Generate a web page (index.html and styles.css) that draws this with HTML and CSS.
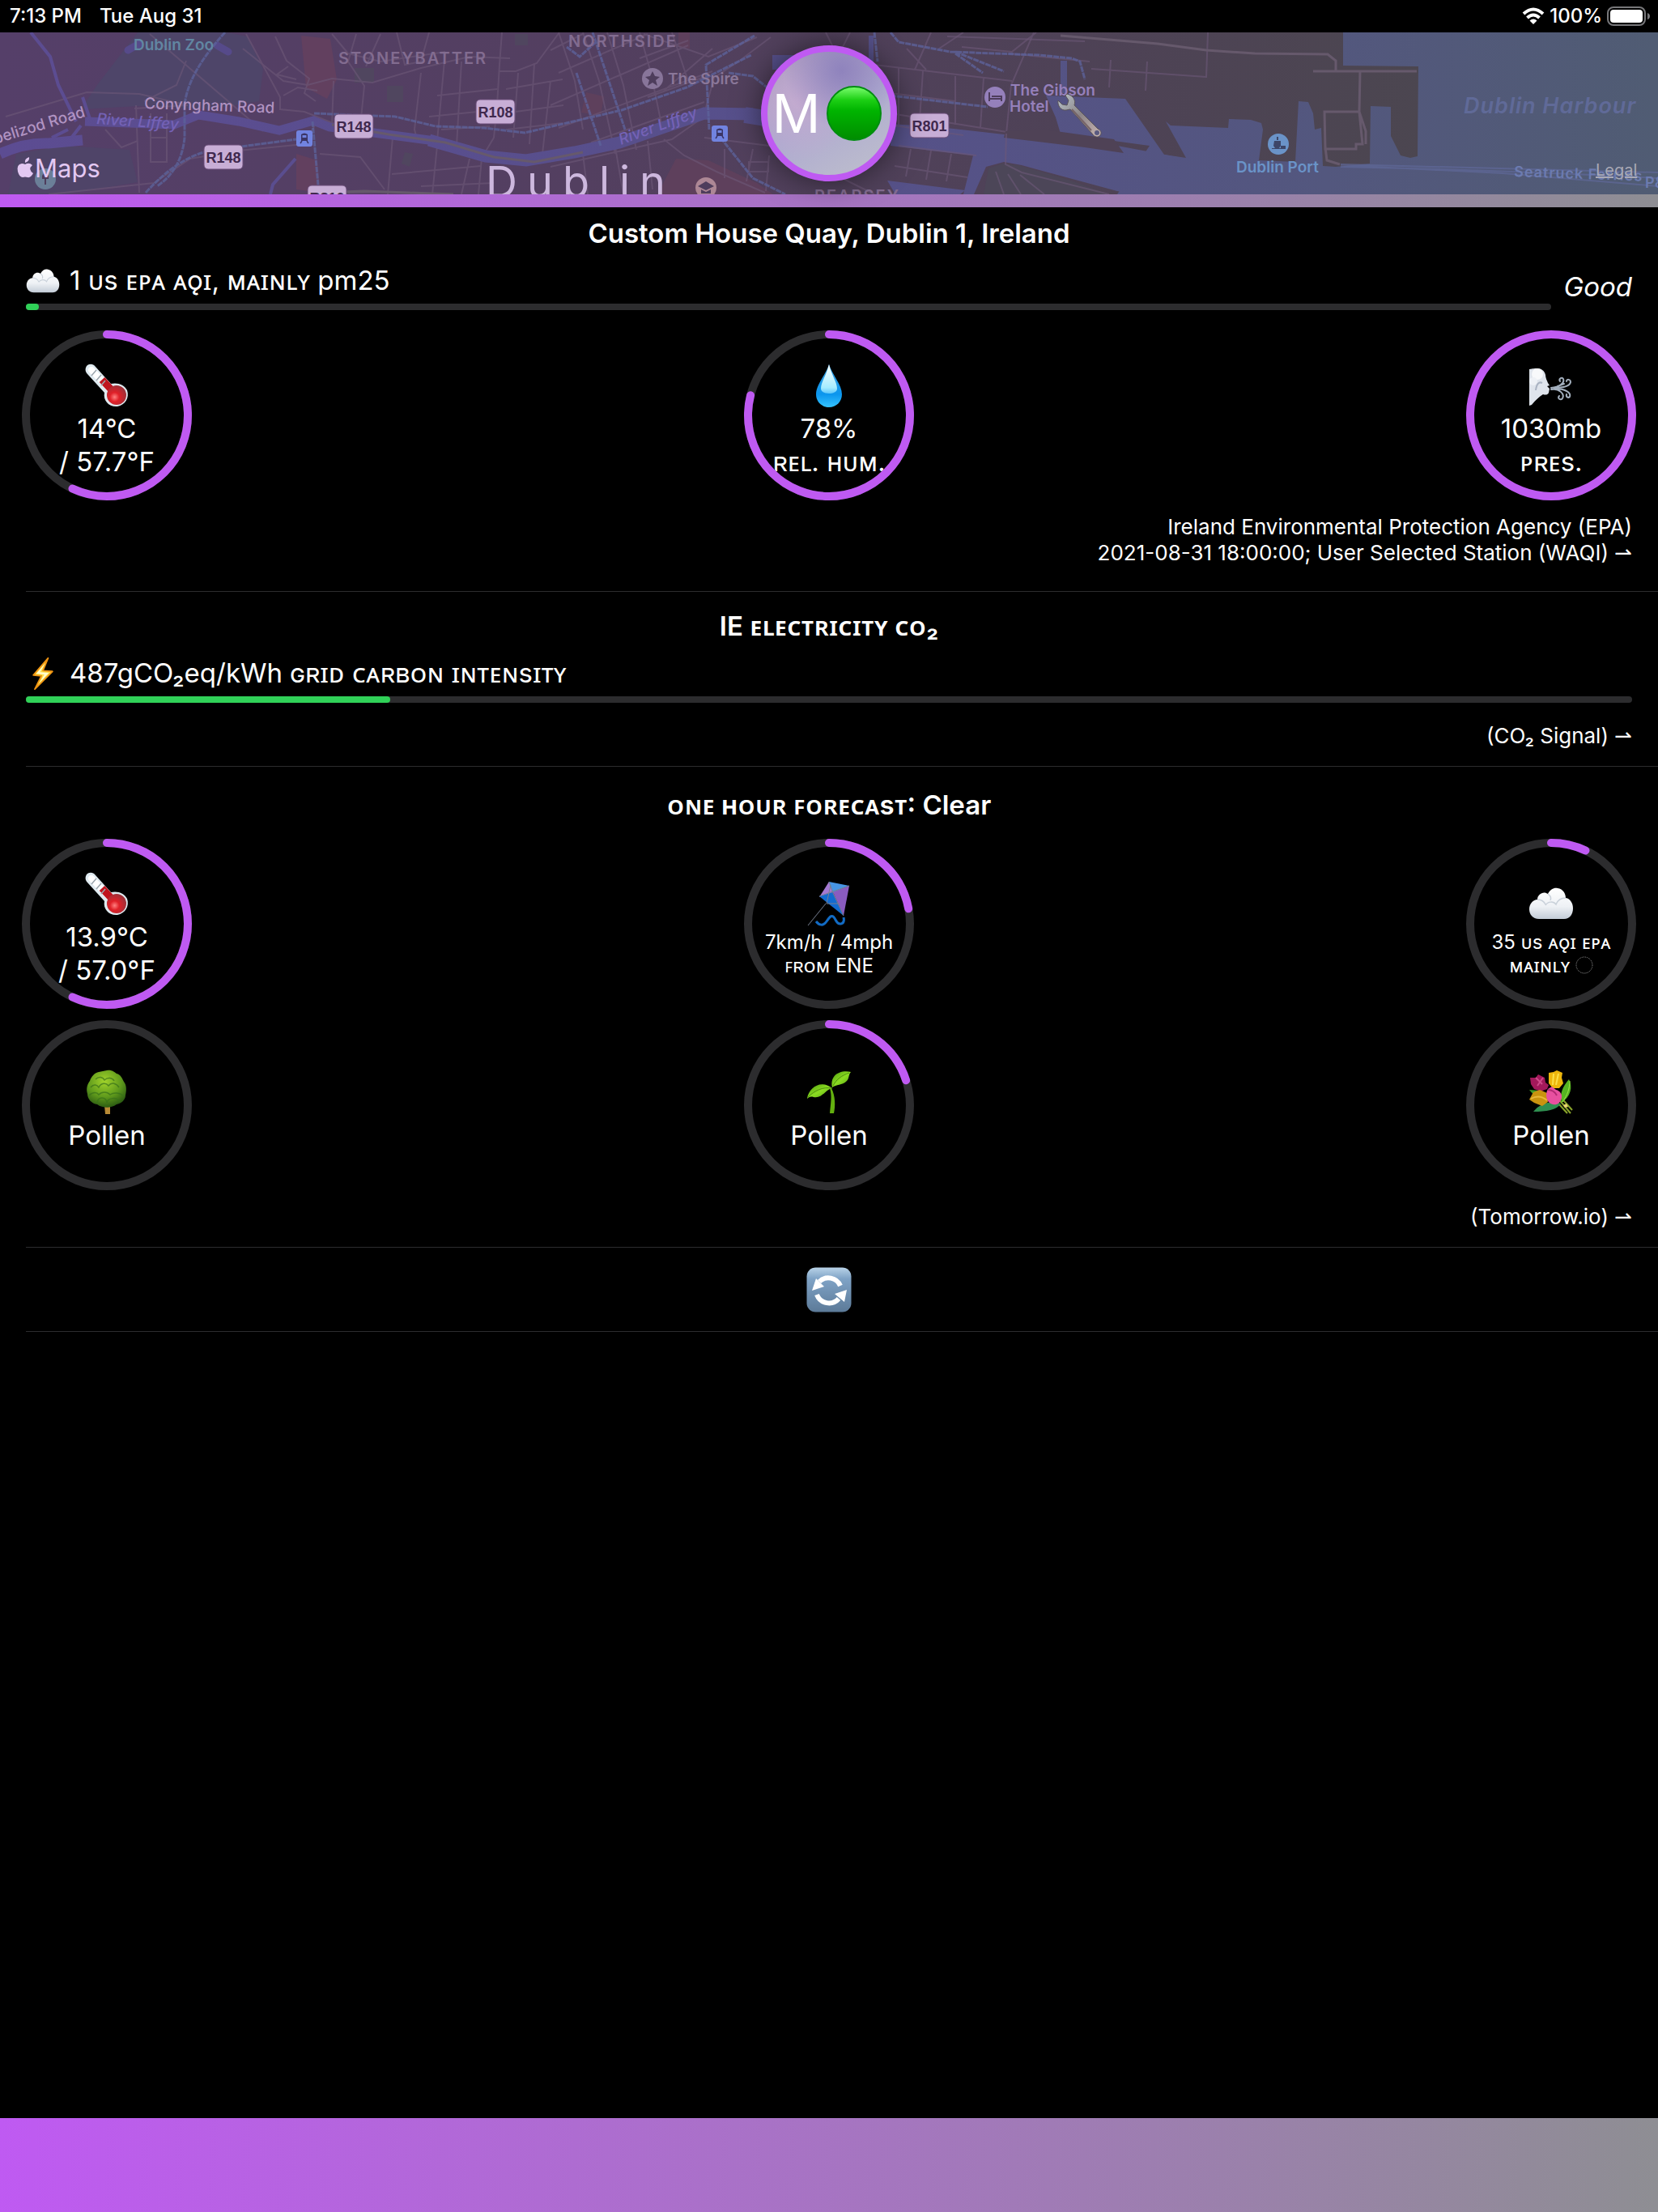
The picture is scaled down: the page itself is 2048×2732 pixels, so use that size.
FILE: index.html
```html
<!DOCTYPE html>
<html lang="en">
<head>
<meta charset="utf-8">
<meta name="viewport" content="width=device-width, initial-scale=1">
<title>Air and energy</title>
<link rel="stylesheet" href="styles.css">
</head>
<body>
<svg class="defs" aria-hidden="true">
  <defs>
    <linearGradient id="cloudFill" x1="0" y1="0" x2="0" y2="1"><stop offset="0" stop-color="#fff"/><stop offset=".6" stop-color="#eef1f5"/><stop offset="1" stop-color="#c3ccd7"/></linearGradient>
    <radialGradient id="bulb" cx=".4" cy=".6" r=".6"><stop offset="0" stop-color="#ff8080"/><stop offset=".4" stop-color="#e02028"/><stop offset="1" stop-color="#a03038"/></radialGradient>
    <linearGradient id="drop" x1="0" y1="0" x2="0" y2="1"><stop offset="0" stop-color="#3aa0e0"/><stop offset=".7" stop-color="#0b96ee"/><stop offset="1" stop-color="#35c4ff"/></linearGradient>
    <linearGradient id="dropShine" x1="0" y1="0" x2="0" y2="1"><stop offset="0" stop-color="#fff"/><stop offset=".8" stop-color="#a5ecff"/><stop offset="1" stop-color="#5cc6fb"/></linearGradient>
    <radialGradient id="leafage" cx=".45" cy=".3" r=".7"><stop offset="0" stop-color="#a2d42b"/><stop offset=".6" stop-color="#5f9a1c"/><stop offset="1" stop-color="#2c5c12"/></radialGradient>
    <linearGradient id="leaf" x1="0" y1="0" x2="1" y2="1"><stop offset="0" stop-color="#4d9a0c"/><stop offset=".5" stop-color="#8bdc22"/><stop offset="1" stop-color="#4d9a0c"/></linearGradient>
    <linearGradient id="tile" x1="0" y1="0" x2="0" y2="1"><stop offset="0" stop-color="#b9d3e8"/><stop offset=".25" stop-color="#7fa3c6"/><stop offset="1" stop-color="#5c7a98"/></linearGradient>
    <linearGradient id="steel" x1="0" y1="0" x2="1" y2="1"><stop offset="0" stop-color="#b9c4cc"/><stop offset=".5" stop-color="#8b8486"/><stop offset="1" stop-color="#c9b6b4"/></linearGradient>
    <linearGradient id="green" x1="0" y1="0" x2="0" y2="1"><stop offset="0" stop-color="#7dff70"/><stop offset=".25" stop-color="#1ccf14"/><stop offset=".45" stop-color="#00b400"/><stop offset="1" stop-color="#008c00"/></linearGradient>
    <symbol id="i-cloud" viewBox="0 0 56 40"><path d="M13 39C5 39 1 33 1 27c0-7 5-12 10-12 0-7 8-11 13-7C27 2 32 0 36 1c7 1 10 7 10 12 6 1 9 7 9 13 0 7-4 13-11 13z" fill="url(#cloudFill)"/><path d="M11 15c5 0 8 2 10 6m3-13c4 3 4 6 3 8m-6 6c3-5 10-5 13-1 2-5 6-8 12-8" fill="none" stroke="#c9d1da" stroke-width="1.5"/></symbol>
    <symbol id="i-thermo" viewBox="0 0 56 56"><path d="M3 4c3-3 8-3 11 1l19 21c8-2 17 1 20 8 3 9-2 18-12 20-10 1-18-7-16-17L4 14C1 11 1 7 3 4z" fill="#dfeaf0"/><path d="M9 9l23 24" stroke="#fff" stroke-width="8" stroke-linecap="round"/><path d="M22 21l14 15" stroke="#c0141e" stroke-width="9"/><circle cx="40" cy="40" r="12" fill="url(#bulb)"/><path d="M9 16l6-7m0 13l6-7m0 13l5-6" stroke="#9aa5ad" stroke-width="1.5"/></symbol>
    <symbol id="i-drop" viewBox="0 0 56 56"><path d="M28 2c4 13 16 25 16 37 0 9-7 16-16 16s-16-7-16-16C12 27 24 15 28 2z" fill="url(#drop)"/><path d="M28 2c3 13 10 22 10 30 0 8-20 8-20 0 0-8 7-17 10-30z" fill="url(#dropShine)"/></symbol>
    <symbol id="i-wind" viewBox="0 0 56 56"><path d="M1 8c5-1 7-1 10-1 5 0 9 3 10 8 0 4 2 7 3 10l2 3-3 1 3 3-1 5c-1 3-5 3-7 2-5 3-9 7-14 13l-3 1z" fill="#dfe4ec"/><circle cx="11" cy="14" r="7" fill="#f8f9fb"/><circle cx="6" cy="23" r="5" fill="#eef1f6"/><path d="M9 34c1-8 4-11 8-9" fill="none" stroke="#aab3c2" stroke-width="2"/><g fill="none" stroke="#a3afbd" stroke-width="2" stroke-linecap="round"><path d="M28 31c10-1 17-6 15-11-2-3-6 0-4 3M31 31c12 0 20-2 21-7 0-4-5-4-5-1M28 33c10-2 17 6 14 11-2 3-7 0-4-3M33 32c12 0 20 5 18 10-2 2-5 0-4-3M36 29l8-3"/></g></symbol>
    <symbol id="i-bolt" viewBox="0 0 30 44"><path d="M22 1L2 24l11 1L4 43l24-24-13-1z" fill="#fde04a" stroke="#ee9312" stroke-width="2" stroke-linejoin="round"/><path d="M18 8L6 22l11 1-7 12 13-14-12-1z" fill="#fffbd0"/></symbol>
    <symbol id="i-kite" viewBox="0 0 56 56"><path d="M28 1L16 20 34 14z" fill="#a479d3"/><path d="M28 1l25 5-20 9z" fill="#4795e4"/><path d="M16 19l17-5 13 29z" fill="#126bd0"/><path d="M53 6L33 14l13 29z" fill="#8a5cc0"/><path d="M28 1l5 14 13 28M16 19L53 6M30 5l-5 23h16M24 28L2 55" fill="none" stroke="#777f90" stroke-width="1"/><path d="M46 45c2 9-6 11-10 3s-7-4-11 2-9 5-13 0" fill="none" stroke="#126bc4" stroke-width="3"/></symbol>
    <symbol id="i-tree" viewBox="0 0 56 56"><path d="M25 44h7v11h-6z" fill="#b88a35"/><path d="M28 1c6-1 9 2 12 4 5 1 7 6 9 10 4 5 3 12 2 17 0 6-6 10-11 11-7 5-17 5-24 0C9 42 4 36 4 30c-2-7 0-12 3-16C9 8 13 4 18 3z" fill="url(#leafage)"/><g fill="none" stroke="#38701a" stroke-width="1.5" opacity=".7"><path d="M8 22c4-5 8-3 10 0 3-6 9-6 12-2 4-5 10-3 13 2M6 32c5-5 10-4 12-1 4-4 10-4 14 0 4-3 12-3 17 2M14 12c4-4 9-3 11 1 4-4 10-3 12 1M16 41c1-8 11-8 12 0 1-6 12-8 16-1"/></g></symbol>
    <symbol id="i-sprout" viewBox="0 0 56 56"><path d="M31 23c5 10 5 22 3 31h-5c1-12 3-21 0-31z" fill="#63b00f"/><path d="M1 36C3 22 18 12 32 23 23 25 20 36 9 34c-4-1-6 0-8 2z" fill="url(#leaf)"/><path d="M32 22C29 8 40 0 55 3c-3 3-2 8-5 11-6 6-13 4-18 8z" fill="url(#leaf)"/><path d="M2 34c8-8 18-13 30-11M33 20C37 12 44 7 53 4" fill="none" stroke="#4e8f10"/></symbol>
    <symbol id="i-bouquet" viewBox="0 0 56 56"><path d="M30 28l22 26M26 30l22 24M36 30l18 20" stroke="#8aa52a" stroke-width="2"/><path d="M50 12c5 10 2 21-9 29-3-10 1-20 9-29z" fill="#55b522"/><path d="M51 14c0 9-3 18-9 26" fill="none" stroke="#9be04a"/><path d="M6 52c8-10 19-14 34-10-5 8-18 10-34 10z" fill="#2f8f50"/><path d="M1 25l12 1-6 6z" fill="#3d9a2a"/><path d="M2 10l7 0 3-4 4 2 4 2 1 6 4 3-2 5-8 3-8-3-4-6z" fill="#a3195b"/><path d="M9 10l8 8M18 10l-7 10" stroke="#cf4a8a" stroke-width="2"/><path d="M25 4l6-1 4-2 7 3-1 6 2 7-5 6-8 0-5-6z" fill="#edb70c"/><path d="M31 5l-1 14M37 5l-3 14" stroke="#fbe04a" stroke-width="2"/><path d="M1 37l5-9 8-3 9 4 1 11-7 5-10-4z" fill="#c9930f"/><path d="M3 36c7-4 14-3 20 2" fill="none" stroke="#e9b93a" stroke-width="2"/><path d="M24 24l5-3 5 4c5 1 8 6 7 10-2 7-6 9-11 8-8-2-10-12-6-19z" fill="#e850a0"/><path d="M24 25c5 0 9 3 11 7" fill="none" stroke="#b32a74" stroke-width="2"/><path d="M43 44l4-2 2 4-4 1z" fill="#e8d470"/></symbol>
    <symbol id="i-refresh" viewBox="0 0 56 56"><rect x=".5" y=".5" width="55" height="55" rx="11" fill="url(#tile)"/><g fill="none" stroke="#fff" stroke-width="6"><path d="M42 23A16 16 0 0 0 16 18"/><path d="M13 34A16 16 0 0 0 40 39"/></g><path d="M12 14L7 29l15-5zM50 28l-15 5 12 10z" fill="#fff"/></symbol>
    <symbol id="i-wrench" viewBox="0 0 56 56"><path d="M2 8c-1 6 3 13 10 12l5-1 27 30c3 5 8 5 10 2 2-3 1-6-3-8L22 14c2-6-1-12-9-14l-2 2 4 6-2 6-6-1z" fill="url(#steel)" stroke="#5a5458" stroke-width="1"/><path d="M19 19l24 26" stroke="#776468" stroke-width="2"/><circle cx="50" cy="48" r="3" fill="#5a5a80"/></symbol>
    <symbol id="i-train" viewBox="0 0 20 20"><rect width="20" height="20" rx="3" fill="#7183e0"/><path d="M6 5q4-3 8 0v8H6z" fill="#3b3565"/><path d="M7.500 6h5v3h-5z" fill="#7183e0"/><path d="M7 13l-2 3m8-3l2 3" stroke="#3b3565" stroke-width="1.500"/></symbol>
  </defs>
</svg>

<div class="status">
  <div class="status-side"><span>7:13 PM</span><span>Tue Aug 31</span></div>
  <div class="status-side status-right">
    <svg width="28" height="22" viewBox="0 0 28 22" aria-label="Wi-Fi"><g fill="none" stroke="#fff" stroke-width="4"><path d="M2 8q12-11 24 0"/><path d="M6.500 13q7.500-7 15 0"/></g><path d="M9.500 16.500q4.500-4 9 0L14 21z" fill="#fff"/></svg>
    <span>100%</span>
    <svg width="54" height="24" viewBox="0 0 54 24" aria-label="Battery full"><rect x="1" y="1" width="46" height="22" rx="7" fill="none" stroke="#77777a" stroke-width="2"/><rect x="4" y="4" width="40" height="16" rx="4" fill="#fff"/><path d="M50 8q3 1 3 4t-3 4z" fill="#77777a"/></svg>
  </div>
</div>

<header class="hero">
  <svg class="map" viewBox="0 40 2048 200" preserveAspectRatio="xMidYMid slice" role="img" aria-label="Map of Dublin">
    <defs>
      <linearGradient id="land" gradientUnits="userSpaceOnUse" x1="0" y1="0" x2="2048" y2="0"><stop offset="0" stop-color="#553f69"/><stop offset=".35" stop-color="#533f60"/><stop offset=".65" stop-color="#4e4256"/><stop offset=".9" stop-color="#4b474f"/></linearGradient>
      <linearGradient id="water" gradientUnits="userSpaceOnUse" x1="0" y1="0" x2="2048" y2="0"><stop offset="0" stop-color="#5c4c92"/><stop offset=".5" stop-color="#56508a"/><stop offset=".8" stop-color="#53577e"/><stop offset="1" stop-color="#505c73"/></linearGradient>
    </defs>
    <path fill="url(#land)" d="M0 40h2048v200H0z"/>
    <path fill="#4e4569" d="M170 40h110l25 5 20 40-5 40-60 10-90-4-70 4 20-30z"/>
    <path fill="#4f4468" d="M20 190l60-10 80 5 10 40-90 15H10z"/>
    <path fill="#62405f" d="M372 44l36 4 8 50-12 24-26-14zM366 190l26 8 4 40-30-4z"/>
    <path fill="#5e405c" d="M835 196l40 2 60 28 20 14H812zM724 114l22 5-4 24-24-4zM838 40h14v20l-14-2z"/>
    <path fill="#50465f" d="M478 106h20v20h-20zM636 42h16v14h-16zM500 188l10 2-4 16-10-4zM438 84h24v18h-24z"/>
    <g class="street">
      <path d="M185 42l140 120M232 130l-60-14-65-2-100 30M232 130l-66 4M304 42l42 78v15l30 3 40 16M230 75l-12 30-40 20M620 40l-3 40-3 50-4 40-15 25-4 45M617 88h20l26-10 28-38M168 130l4 108M60 240l130-14 45-30 60-10 80-8 15-25"/>
      <path d="M300 60l50 40 30 5 30-8 50 5 60-18 60-14 50 2M340 45l14 30 28 22-6 18 14 10M410 42l20 24 40 10 80-12M440 42l-10 34 20 30-4 40M412 100l-2 55M470 42l-18 40M490 40l10 40 20-4 10-36M520 90l-8 70 4 16M550 64l-10 110M570 76l-6 104M540 118l74-8M530 144l80-8M545 160l60-4M350 118l18-10 24 4M356 82l-14 10 24 6"/>
      <path d="M640 90l-6 80M660 78l-6 100M680 100l-10 90M625 110l70-12M622 140l74-10M625 160l70-8M485 170l-6 70M540 180l-6 60M580 196l-10 44M484 215l110-10M520 230l90-4M395 190l50 4 30 40M186 140v60h20v-60M186 170h20M130 160l20 22 20-8M430 238l50-1 80 3"/>
      <path d="M680 62l40-20M690 90l110-48M680 130l170-74M690 158l190-70M720 40l20 60 20 90M750 40l20 65 16 80M790 40l14 50 14 68M830 40l20 60M690 40l20 60 10 60M730 176l140-50M850 50l-60 22M880 60l-60 52M870 95l-70 25M795 42l80 28 60-24M870 140l12-44 30-20 40-30"/>
      <path d="M680 206l150-34 40-28h60l40 10M820 172l25 20 40 20 60 26M760 182l10 58M800 174l6 60M720 190l6 50M870 170l80 10 70 30 60 30M895 184v36M930 184l-8 40M925 200h24v12h-24zM950 192l-4 44"/>
      <path d="M1020 40l20 40M1050 40l-20 40M1080 80l170 20M1110 84v70M1140 88l-4 60M1100 140l150 24M1120 60l24 26M1150 40l-20 46M1160 60l30-20M1188 58l62 6 30-24M1246 66l100 10M1100 115l80 10M1180 94v60M1215 96l-4 62M1277 40l-28 65-6 60"/>
    </g>
    <g fill="none" stroke="url(#water)">
      <path stroke-width="13" d="M0 190q30-14 60-13l42-4"/>
      <path stroke-width="11" d="M105 150l110 4 30-12 50 8 50 11 42-12 20 8 70 9 60 8"/>
      <path stroke-width="15" d="M530 173l70 20 50 5 60-10 55-12 105-36 60 1"/>
      <path stroke-width="20" d="M920 142l100 16 110 8"/>
      <path stroke-width="4" d="M38 40l24 30 10 35 22 45M102 120l10 30M365 196l-28 32-3 12M84 160l-20 10M100 155l-14 18"/>
    </g>
    <path fill="none" stroke="#564a8a" stroke-width="9" stroke-linecap="round" d="M158 62l14-8M268 56l14 8"/>
    <g fill="url(#water)">
      <path d="M954 68h30v18h-30zM1072 82h8v30h-8zM1073 44h6v40h-6zM1310 75h8v40h-8zM1096 223l96 12-6 5h-80z"/>
      <path d="M1100 153l60 4 80 9 140 14 80 15 5 45h-63l-22-4-118-32-22-4-22 6-15 34h-13l12-48-102-12z"/>
      <path d="M1292 118l98 4 48 69 27 4-25-45 6 5 71 3-4 45 5-56 27 1 13 4 2 8-5 38 45 2 4-75 12 1 6 14 2 20 8-2 2 47 16 1 42-4 1-71 25 1v36l12 24 12 3 9-2 1-111-93-1V40h389v200h-600l-36-7-12 7h-20l40-60-110-15-6-20z"/>
    </g>
    <path fill="#4f4256" d="M1290 160l86 12 12 17-48-7-100-12 2-8z"/>
    <path fill="#4c4658" d="M1238 202l20 2 62 18 50 18H1215l6-32z"/>
    <g class="street"><path d="M1243 165l-1 38 20 10 108 27M1090 153l100 14M1110 180l96 12M1105 205l90 14M1125 184l-6 34M1150 186l-6 36M1175 190l-6 34M1230 212l10 28M1245 215l16 25M1260 216l30 24M1170 45l170 6M1348 85l142 10M1492 40l-2 56M1372 74l-2 34M1417 76l-2 36"/></g>
    <g class="road">
      <path d="M1310 44l120 10 60 8 60 4 90 1 10 8v14M1622 88h128M1680 88l-1 50 8 24v16M1636 138h43l4 40h-8v6h-38zM1637 182l2 16 16 5"/>
      <path d="M395 238L450 236 560 240M410 154l70 12 70 10 60 18 50 6 60-12"/>
    </g>
    <g class="rail">
      <path d="M278 40q-46 50-50 90v40q-4 40-34 60"/><path d="M180 238q40-44 80-52l106-14M388 140l100 4 50 12 60 2 50 6 60-14 60-14 80-28 80-40M386 150l8 90M732 40l40 120M712 90l30 90M700 58l16 12 20-18M876 160l-4-80 60-36M890 170l40 50 40 20M1100 118l120 14M1080 40l4 36M1100 40l10 12 64 12 110 4 40 4 10 4 6 22M1180 64l60 24M1180 66l34 24M900 90l30 4 20 16"/>
    </g>
    <g fill="none" stroke="#5f6898" stroke-width="2" opacity=".7"><path d="M1656 203l392 10M1656 204l200 10 192 16M1656 206q200 4 392 14"/></g>

    <g class="label">
      <text x="165" y="62" fill="#6186a2">Dublin Zoo</text>
      <text class="area" x="418" y="79">STONEYBATTER</text>
      <text class="area" x="702" y="58">NORTHSIDE</text>
      <text class="area" x="1006" y="249">PEARSEY</text>
      <text class="pale" x="178" y="134" transform="rotate(2 178 134)">Conyngham Road</text>
      <text class="pale" x="-6" y="178" transform="rotate(-17 -6 178)">pelizod Road</text>
      <text class="river" x="119" y="153" transform="rotate(4 119 153)">River Liffey</text>
      <text class="river" x="767" y="179" transform="rotate(-20 767 179)">River Liffey</text>
      <text x="825" y="104" fill="#8a7799">The Spire</text>
      <text x="1248" y="118" fill="#9580bb">The Gibson</text>
      <text x="1247" y="138" fill="#9580bb">Hotel</text>
      <text x="1527" y="213" fill="#6a93c8">Dublin Port</text>
      <text class="harbour" x="1808" y="140">Dublin Harbour</text>
      <text class="ferry" x="1870" y="218" transform="rotate(2 1870 218)">Seatruck Ferries</text>
      <text class="ferry" x="2032" y="232">P&amp;</text>
      <text class="city" x="600" y="244">Dublin</text>
    </g>
    <g class="shield">
      <rect x="252" y="179" width="48" height="30" rx="5"/><text x="276" y="201">R148</text>
      <rect x="413" y="141" width="48" height="30" rx="5"/><text x="437" y="163">R148</text>
      <rect x="588" y="123" width="48" height="30" rx="5"/><text x="612" y="145">R108</text>
      <rect x="380" y="229" width="48" height="30" rx="5"/><text x="404" y="251">R810</text>
      <rect x="1124" y="140" width="48" height="30" rx="5"/><text x="1148" y="162">R801</text>
    </g>
    <use href="#i-train" x="366" y="161" width="20" height="20"/>
    <use href="#i-train" x="879" y="155" width="20" height="20"/>
    <circle cx="806" cy="97" r="13" fill="#88759a"/><path d="M806 88l3 6 6 1-5 4 2 7-6-4-6 4 2-7-5-4 6-1z" fill="#4e3d5c"/>
    <circle cx="872" cy="232" r="13" fill="#ad8795"/><path d="M862 230l10-6 10 6-10 5zM866 234v5h12v-5l-6 3z" fill="#4e3d5c"/>
    <circle cx="1229" cy="120" r="13" fill="#9580bb"/><path d="M1222 114v11M1222 122h15v3M1225 119h12v3" fill="none" stroke="#4e3d5c" stroke-width="2"/>
    <circle cx="1579" cy="178" r="13" fill="#6a93c8"/><path d="M1574 174h8v6l-2 3h-5l-2-3zM1577 169h2v4h-2zM1571 184h17v-4h-6v3h-11z" fill="#3d4668"/>
    <circle cx="56" cy="221" r="13" fill="#6b7f98"/><path d="M56 213q5 2 4 8h-3v7h-2v-7h-3q-1-6 4-8z" fill="#4e3d5c"/>
    <path fill="#e3c8f2" d="M36 194q1 5-5 7-1-5 5-7zM31 203q5-3 9 1-6 5 1 10-3 6-7 5-3-1-6 0-4 0-6-7-2-9 5-10 2 0 4 1z"/>
    <text class="brand" x="43" y="219">Maps</text>
    <a href="#legal"><text class="legal" x="1971" y="217">Legal</text></a>
  </svg>
  <button class="badge" type="button"><span>M</span><svg width="68" height="68" viewBox="0 0 68 68" aria-label="Good"><circle cx="34" cy="34" r="33" fill="url(#green)" stroke="#008d10" stroke-width="2"/></svg></button>
  <button class="settings" type="button" aria-label="Settings"><svg width="56" height="56"><use href="#i-wrench"/></svg></button>
</header>

<main>
  <section class="panel air">
    <h2>Custom House Quay, Dublin 1, Ireland</h2>
    <div class="meter-row">
      <div class="meter">
        <div class="reading"><svg class="lead" viewBox="0 0 56 40"><use href="#i-cloud"/></svg><span>1 ᴜs ᴇᴘᴀ ᴀǫɪ, ᴍᴀɪɴʟʏ pm25</span></div>
        <div class="bar" role="progressbar" aria-label="AQI" aria-valuenow="1" aria-valuemax="500"><i style="width:0.2%"></i></div>
      </div>
      <em>Good</em>
    </div>
    <div class="rings">
      <div class="ring"><svg class="dial" viewBox="0 0 210 210"><circle class="track" cx="105" cy="105" r="100"/><circle class="value" cx="105" cy="105" r="100" pathLength="100" stroke-dasharray="57 100"/></svg><div class="face"><svg class="icon"><use href="#i-thermo"/></svg><span>14°C</span><span>/ 57.7°F</span></div></div>
      <div class="ring"><svg class="dial" viewBox="0 0 210 210"><circle class="track" cx="105" cy="105" r="100"/><circle class="value" cx="105" cy="105" r="100" pathLength="100" stroke-dasharray="79 100"/></svg><div class="face"><svg class="icon"><use href="#i-drop"/></svg><span>78%</span><span>ʀᴇʟ. ʜᴜᴍ.</span></div></div>
      <div class="ring"><svg class="dial" viewBox="0 0 210 210"><circle class="value" cx="105" cy="105" r="100"/></svg><div class="face"><svg class="icon"><use href="#i-wind"/></svg><span>1030mb</span><span>ᴘʀᴇs.</span></div></div>
    </div>
    <p class="source"><a href="#waqi">Ireland Environmental Protection Agency (EPA)<br>2021-08-31 18:00:00; User Selected Station (WAQI) ⇀</a></p>
  </section>

  <section class="panel grid-power">
    <h2>IE ᴇʟᴇᴄᴛʀɪᴄɪᴛʏ ᴄᴏ₂</h2>
    <div class="meter">
      <div class="reading"><svg class="lead" viewBox="0 0 30 44"><use href="#i-bolt"/></svg><span>487gCO₂eq/kWh ɢʀɪᴅ ᴄᴀʀʙᴏɴ ɪɴᴛᴇɴsɪᴛʏ</span></div>
      <div class="bar" role="progressbar" aria-label="Grid carbon intensity" aria-valuenow="487"><i style="width:22.7%"></i></div>
    </div>
    <p class="source"><a href="#co2">(CO₂ Signal) ⇀</a></p>
  </section>

  <section class="panel forecast">
    <h2>ᴏɴᴇ ʜᴏᴜʀ ꜰᴏʀᴇᴄᴀsᴛ: Clear</h2>
    <div class="rings">
      <div class="ring"><svg class="dial" viewBox="0 0 210 210"><circle class="track" cx="105" cy="105" r="100"/><circle class="value" cx="105" cy="105" r="100" pathLength="100" stroke-dasharray="57 100"/></svg><div class="face"><svg class="icon"><use href="#i-thermo"/></svg><span>13.9°C</span><span>/ 57.0°F</span></div></div>
      <div class="ring"><svg class="dial" viewBox="0 0 210 210"><circle class="track" cx="105" cy="105" r="100"/><circle class="value" cx="105" cy="105" r="100" pathLength="100" stroke-dasharray="22 100"/></svg><div class="face small"><svg class="icon"><use href="#i-kite"/></svg><span>7km/h / 4mph</span><span>ꜰʀᴏᴍ ENE</span></div></div>
      <div class="ring"><svg class="dial" viewBox="0 0 210 210"><circle class="track" cx="105" cy="105" r="100"/><circle class="value" cx="105" cy="105" r="100" pathLength="100" stroke-dasharray="7 100"/></svg><div class="face small"><svg class="icon"><use href="#i-cloud"/></svg><span>35 ᴜs ᴀǫɪ ᴇᴘᴀ</span><span>ᴍᴀɪɴʟʏ <svg class="empty" viewBox="0 0 22 22"><circle cx="11" cy="11" r="10" fill="none" stroke="#999" stroke-dasharray="1 1"/></svg></span></div></div>
      <div class="ring"><svg class="dial" viewBox="0 0 210 210"><circle class="track" cx="105" cy="105" r="100"/></svg><div class="face"><svg class="icon"><use href="#i-tree"/></svg><span>Pollen</span></div></div>
      <div class="ring"><svg class="dial" viewBox="0 0 210 210"><circle class="track" cx="105" cy="105" r="100"/><circle class="value" cx="105" cy="105" r="100" pathLength="100" stroke-dasharray="20 100"/></svg><div class="face"><svg class="icon"><use href="#i-sprout"/></svg><span>Pollen</span></div></div>
      <div class="ring"><svg class="dial" viewBox="0 0 210 210"><circle class="track" cx="105" cy="105" r="100"/></svg><div class="face"><svg class="icon"><use href="#i-bouquet"/></svg><span>Pollen</span></div></div>
    </div>
    <p class="source"><a href="#tomorrow">(Tomorrow.io) ⇀</a></p>
  </section>

  <section class="panel refresh">
    <button type="button" aria-label="Refresh"><svg width="56" height="56"><use href="#i-refresh"/></svg></button>
  </section>
</main>
<footer class="foot"></footer>
</body>
</html>
```

FILE: styles.css
```css
:root {
  --purple: #bf5af2;
  --gray: #8e8e93;
  --track: #2c2c2e;
  --green: #30d158;
}

* { box-sizing: border-box; }

body {
  margin: 0;
  min-height: 100vh;
  display: flex;
  flex-direction: column;
  background: #000;
  color: #fff;
  font-family: Inter, "Noto Sans", "DejaVu Sans", sans-serif;
  font-size: 33px;
  line-height: 41px;
}

button {
  padding: 0;
  border: 0;
  background: none;
  color: inherit;
  font: inherit;
  cursor: pointer;
}

svg { display: block; flex: none; }
a { color: inherit; text-decoration: none; }
.defs { position: absolute; width: 0; height: 0; }

/* Status bar */
.status {
  display: flex;
  justify-content: space-between;
  height: 40px;
  padding: 0 9px 0 12px;
  font-size: 24px;
  line-height: 40px;
  font-weight: 500;
}
.status-side { display: flex; align-items: center; gap: 22px; }
.status-right { gap: 6px; }

/* Map header */
.hero {
  position: relative;
  height: 216px;
  border-bottom: 16px solid;
  border-image: linear-gradient(90deg, var(--purple), var(--gray)) 1;
}
.map { width: 100%; height: 200px; }
.street, .road, .rail { fill: none; }
.street { stroke: #6d5878; stroke-width: 2; opacity: .6; }
.road { stroke: #66596c; stroke-width: 3; }
.rail { stroke: #5c629a; stroke-width: 3; stroke-dasharray: 7 1; opacity: .8; }
.label { font-size: 19px; font-weight: 600; }
.area { font-size: 20px; letter-spacing: 2px; fill: #826c90; }
.pale { fill: #b193c2; font-weight: 500; }
.river { fill: #7462b6; font-style: italic; font-weight: 500; }
.harbour { font-size: 27px; font-style: italic; letter-spacing: 1px; fill: #606a98; }
.ferry { font-size: 18px; letter-spacing: 1px; fill: #6c7bb0; }
.city { font-size: 54px; font-weight: 400; letter-spacing: 12px; fill: #cdb8de; }
.shield rect { fill: #c8aed6; stroke: #6a4d78; }
.shield text { font: 700 18px "Liberation Sans Narrow", "Liberation Sans", sans-serif; text-anchor: middle; fill: #40294e; }
.brand { font-size: 31px; fill: #e3c8f2; }
.legal { font-size: 20px; fill: #a9a9b6; text-decoration: underline; }

.badge {
  position: absolute;
  left: 50%;
  top: 16px;
  width: 168px;
  height: 168px;
  margin-left: -84px;
  padding-right: 5px;
  display: flex;
  align-items: center;
  justify-content: center;
  gap: 8px;
  border: 8px solid var(--purple);
  border-radius: 50%;
  background:
    radial-gradient(circle at 60% 15%, #8f83bd 0, transparent 45%),
    radial-gradient(circle at 25% 40%, #c4abd0 0, transparent 50%),
    linear-gradient(150deg, #a794b8, #aeaad0 50%, #bfc0cc);
  box-shadow: 0 0 36px rgba(0, 0, 0, .5);
  font-size: 66px;
  line-height: 80px;
}
.settings { position: absolute; left: 50%; top: 76px; margin-left: 281px; }

/* Panels */
.panel { margin-left: 32px; padding: 22px 32px 21px 0; border-bottom: 1px solid var(--track); }
.air { padding-top: 12px; padding-bottom: 31px; }
.forecast { padding-top: 27px; }
.refresh { display: flex; justify-content: center; padding-top: 24px; padding-bottom: 23px; }

h2 { margin: 0 0 17px; font-size: 33px; line-height: 41px; font-weight: 600; text-align: center; }
.meter-row { display: grid; grid-template-columns: 1fr auto; align-items: center; gap: 16px; }
.reading { display: flex; align-items: center; gap: 12px; margin-bottom: 8px; }
.lead { width: 42px; height: 40px; }
.bar { height: 8px; border-radius: 4px; background: var(--track); }
.bar i { display: block; height: 8px; min-width: 16px; border-radius: 4px; background: var(--green); }

/* The outer half of each ring's stroke hangs over the text margin */
.rings { display: grid; grid-template-columns: repeat(3, 210px); justify-content: space-between; gap: 14px 0; margin: 25px -5px 17px; }
.forecast .rings { margin-top: 21px; }
.ring { display: grid; height: 210px; }
.dial, .face { grid-area: 1 / 1; }
.dial { width: 210px; height: 210px; transform: rotate(-90deg); }
.dial circle { fill: none; stroke-width: 10; stroke-linecap: round; }
.dial .track { stroke: var(--track); }
.dial .value { stroke: var(--purple); }
.face { display: flex; flex-direction: column; align-items: center; justify-content: center; padding-top: 8px; white-space: nowrap; }
.icon { width: 56px; height: 56px; margin: 5px 0; }
.small { font-size: 24px; line-height: 29px; }
.empty { display: inline-block; width: 22px; height: 22px; vertical-align: -2px; }

.source { margin: 25px 0 0; font-size: 26px; line-height: 32px; text-align: right; }
.rings + .source { margin-top: 0; }

.foot { height: 116px; margin-top: auto; background: linear-gradient(93deg, var(--purple), var(--gray)); }
```
